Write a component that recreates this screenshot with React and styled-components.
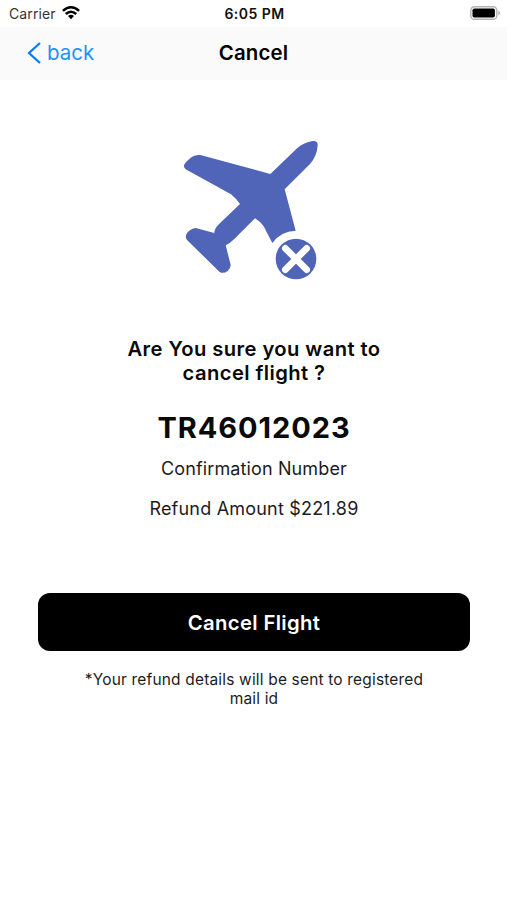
import React from "react";
import styled, { createGlobalStyle } from "styled-components";

const GlobalStyle = createGlobalStyle`
  * {
    box-sizing: border-box;
  }
  body {
    margin: 0;
    background: #fff;
    color: #000;
    font-family: Inter, "Liberation Sans", sans-serif;
  }
`;

const Screen = styled.div`
  width: 507px;
  height: 900px;
  display: flex;
  flex-direction: column;
  background: #fff;
`;

const StatusBar = styled.div`
  height: 27px;
  padding: 0 7px 0 9px;
  display: grid;
  grid-template-columns: 1fr auto 1fr;
  align-items: center;
`;

const Carrier = styled.div`
  display: flex;
  align-items: center;
  gap: 6px;
  font-size: 14px;
  line-height: 27px;
  letter-spacing: 0.1px;
  color: #333;
`;

const Clock = styled.div`
  font-size: 14px;
  line-height: 27px;
  font-weight: 600;
  letter-spacing: 0.45px;
  color: #111;
`;

const Battery = styled.svg`
  justify-self: end;
`;

const NavBar = styled.div`
  height: 53px;
  padding: 0 27px 2px;
  display: grid;
  grid-template-columns: 1fr auto 1fr;
  align-items: center;
  background: #fafafa;
`;

const BackButton = styled.button`
  display: flex;
  align-items: center;
  gap: 5px;
  padding: 0;
  border: 0;
  background: none;
  font-family: inherit;
  font-size: 20.5px;
  line-height: 26px;
  color: #1a94fb;
`;

const Title = styled.div`
  font-size: 20.4px;
  line-height: 26px;
  font-weight: 600;
  letter-spacing: 0.15px;
`;

const Content = styled.div`
  display: flex;
  flex-direction: column;
  align-items: center;
  padding: 50px 37px 0 38px;
  text-align: center;
`;

const Plane = styled.svg`
  margin-right: 9px;
`;

const Text = styled.div`
  margin-top: ${p => p.top}px;
  font-size: ${p => p.size}px;
  line-height: ${p => p.line}px;
  font-weight: ${p => p.weight || 400};
  letter-spacing: ${p => p.spacing || 0}px;
  color: ${p => p.color || "#0a0a0a"};
`;

const CancelButton = styled.button`
  width: 100%;
  height: 58px;
  margin-top: 72px;
  padding: 0;
  border: 0;
  border-radius: 12px;
  background: #000;
  color: #fff;
  font-family: inherit;
  font-size: 20.3px;
  font-weight: 600;
  letter-spacing: 0.35px;
`;

class CancelFlight extends React.Component {
  state = {
    confirmation: "TR46012023",
    refund: "$221.89"
  };

  render() {
    return (
      <Screen>
        <GlobalStyle />
        <StatusBar>
          <Carrier>
            <span>Carrier</span>
            <svg width="18" height="15" viewBox="0 0 18 15">
              <g fill="none" stroke="#000" strokeWidth="2.5">
                <path d="M0.9 4.9Q9 -2.3 17.1 4.9" />
                <path d="M3.8 8Q9 3.4 14.2 8" />
              </g>
              <path d="M6 10Q9 7.5 12 10L9 13.2Z" />
            </svg>
          </Carrier>
          <Clock>6:05 PM</Clock>
          <Battery width="30" height="15" viewBox="0 0 30 15">
            <rect x="0.8" y="0.7" width="26" height="12.6" rx="3.6" fill="#fff" stroke="#b4b4b4" strokeWidth="1.4" />
            <rect x="2.5" y="2.4" width="22.4" height="9.2" rx="1.8" />
            <path d="M28.3 4.8Q30 5.8 30 7T28.3 9.2Z" fill="#aaa" />
          </Battery>
        </StatusBar>
        <NavBar>
          <BackButton>
            <svg width="15" height="22" viewBox="0 0 15 22">
              <path d="M13 1L2 11L13 21" fill="none" stroke="#007aff" strokeWidth="2.2" />
            </svg>
            back
          </BackButton>
          <Title>Cancel</Title>
        </NavBar>
        <Content>
          <Plane width="160" height="160" viewBox="0 0 480 480" fill="#5065b8">
            <path d="M42 106Q43 101 49 95L62 83Q73 73 91 75L301 132L382 54Q401 38 428 33Q444 31 443 46Q441 79 420 102L344 178L377 302Q331 304 307 339L281 289Q269 273 255 265L192 328Q180 340 167 346L182 404Q183 414 173 423Q160 433 148 425L51 330Q44 321 51 309Q62 296 77 294L133 309Q132 296 148 281L210 222Q200 207 183 193L47 118Q41 112 42 106Z" />
            <circle cx="378" cy="387" r="61" />
            <path d="M346 355L410 419M410 355L346 419" stroke="#fff" strokeWidth="20" strokeLinecap="round" />
          </Plane>
          <Text top={47} size={20.2} line={24} weight={600} spacing={0.42}>
            Are You sure you want to
            <br />
            cancel flight ?
          </Text>
          <Text top={25} size={29} line={36} weight={700} spacing={0.95}>
            {this.state.confirmation}
          </Text>
          <Text top={11} size={18} line={24} spacing={0.12} color="#1c1c1c">
            Confirmation Number
          </Text>
          <Text top={16} size={18} line={24} spacing={0.2} color="#1c1c1c">
            Refund Amount {this.state.refund}
          </Text>
          <CancelButton>Cancel Flight</CancelButton>
          <Text top={19} size={15.5} line={19} spacing={0.17} color="#1c1c1c">
            *Your refund details will be sent to registered
            <br />
            mail id
          </Text>
        </Content>
      </Screen>
    );
  }
}

export default CancelFlight;
